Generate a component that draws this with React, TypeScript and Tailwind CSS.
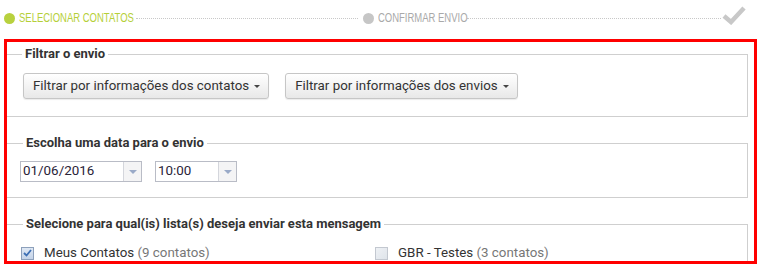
import React from "react";

function Caret() {
  return (
    <span className="ml-[5px] inline-block h-0 w-0 border-l-[3px] border-r-[3px] border-t-[3px] border-l-transparent border-r-transparent border-t-[#444] align-middle" />
  );
}

function FilterButton({ label }: { label: string }) {
  return (
    <button className="flex h-[26px] items-center rounded-[3px] border border-[#c6c6c6] bg-gradient-to-b from-white to-[#e8e8e8] pl-[9px] pr-[8px] text-[13.33px] text-[#333] shadow-[0_1px_1px_rgba(0,0,0,0.08)]">
      {label}
      <Caret />
    </button>
  );
}

function ComboInput({ value, width }: { value: string; width: string }) {
  return (
    <div className={`flex h-[21px] border border-[#b9bcc6] bg-white ${width}`}>
      <div className="flex flex-1 items-center pl-[2px] text-[13.4px] text-[#2a2438]">{value}</div>
      <div className="flex w-[18px] items-center justify-center border-l border-[#d4d6dc] bg-[#f4f4f5]">
        <span className="inline-block h-0 w-0 border-l-[4px] border-r-[4px] border-t-[4px] border-l-transparent border-r-transparent border-t-[#9aaac8]" />
      </div>
    </div>
  );
}

function Checkbox({ checked }: { checked: boolean }) {
  return (
    <span
      className={`flex h-[13px] w-[13px] items-center justify-center border ${
        checked ? "border-[#8da0bb] bg-gradient-to-b from-[#dfe8f4] to-[#c4d3e8]" : "border-[#c3c8d0] bg-gradient-to-br from-[#eef1f5] to-[#dfe4ea]"
      }`}
    >
      {checked && (
        <svg width="9" height="8" viewBox="0 0 9 8">
          <path d="M1 4 L3.5 6.5 L8 1" fill="none" stroke="#3d6fb4" strokeWidth="1.8" />
        </svg>
      )}
    </span>
  );
}

export default function App() {
  return (
    <div className="w-[767px] h-[267px] overflow-hidden bg-white font-['Roboto','Liberation_Sans',sans-serif] text-[#333]">
      {/* Stepper */}
      <div className="flex h-[36px] items-center pl-[4px] pr-[21px] font-['Liberation_Sans',sans-serif] text-[12px]">
        <span className="h-[11px] w-[11px] shrink-0 rounded-full bg-[#b8d13e]" />
        <span className="ml-[4px] inline-block w-[116px] shrink-0 overflow-visible whitespace-nowrap">
          <span className="inline-block origin-left scale-x-[0.79] text-[#b5cf38]">SELECIONAR CONTATOS</span>
        </span>
        <span className="ml-[1px] mr-[5px] mt-[1px] w-[222px] shrink-0 border-t border-dotted border-[#c8c8c8]" />
        <span className="h-[11px] w-[11px] shrink-0 rounded-full bg-[#c6c6c6]" />
        <span className="ml-[4px] inline-block w-[87px] shrink-0 overflow-visible whitespace-nowrap">
          <span className="inline-block origin-left scale-x-[0.79] text-[#a9a9a9]">CONFIRMAR ENVIO</span>
        </span>
        <span className="ml-[2px] mr-[1px] mt-[1px] flex-1 border-t border-dotted border-[#c8c8c8]" />
        <svg width="24" height="20" viewBox="0 0 24 20" className="-mt-[6px] shrink-0">
          <path d="M2 11 L9 17 L22 3" fill="none" stroke="#c8c8c8" strokeWidth="4.5" strokeLinejoin="miter" />
        </svg>
      </div>

      {/* Red highlighted area */}
      <div className="ml-[4px] mt-[3px] h-[225px] w-[753px] overflow-hidden border-[3px] border-[#ff0000]">
        <fieldset className="mr-[6px] mt-[3px] border-b border-r border-t border-[#cfcfcf] pb-[17px] pl-[13px]">
          <legend className="ml-[2px] px-[3px] text-[13px] font-bold leading-[18px] text-[#333]">Filtrar o envio</legend>
          <div className="ml-[3px] mt-[10px] flex gap-[16px]">
            <FilterButton label="Filtrar por informações dos contatos" />
            <FilterButton label="Filtrar por informações dos envios" />
          </div>
        </fieldset>

        <fieldset className="mr-[6px] mt-[17px] border-b border-r border-t border-[#cfcfcf] pb-[15px] pl-[13px]">
          <legend className="ml-[3px] px-[3px] text-[13px] font-bold leading-[18px] text-[#333]">Escolha uma data para o envio</legend>
          <div className="mt-[9px] flex gap-[13px]">
            <ComboInput value="01/06/2016" width="w-[122px]" />
            <ComboInput value="10:00" width="w-[82px]" />
          </div>
        </fieldset>

        <fieldset className="mr-[6px] mt-[17px] border-b border-r border-t border-[#cfcfcf] pb-[15px] pl-[13px]">
          <legend className="ml-[3px] px-[3px] text-[13px] font-bold leading-[18px] text-[#333]">
            Selecione para qual(is) lista(s) deseja enviar esta mensagem
          </legend>
          <div className="mt-[10px] flex text-[13.33px] leading-[20px]">
            <label className="flex w-[355px] items-center pl-[1px]">
              <Checkbox checked />
              <span className="ml-[10px]">
                Meus Contatos <span className="text-[#777]">(9 contatos)</span>
              </span>
            </label>
            <label className="flex items-center">
              <Checkbox checked={false} />
              <span className="ml-[10px]">
                GBR - Testes <span className="text-[#777]">(3 contatos)</span>
              </span>
            </label>
          </div>
        </fieldset>
      </div>
    </div>
  );
}
